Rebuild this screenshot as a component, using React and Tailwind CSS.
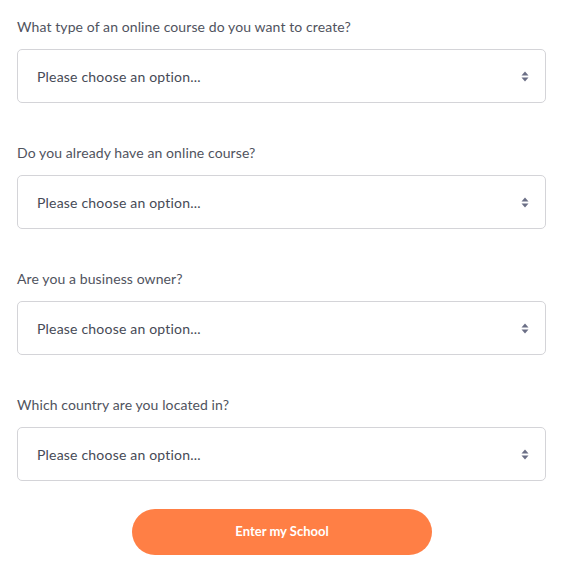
import React from 'react';

const questions = [
  'What type of an online course do you want to create?',
  'Do you already have an online course?',
  'Are you a business owner?',
  'Which country are you located in?',
];

const SortIcon = () => (
  <svg width="8" height="11" viewBox="0 0 8 11" className="shrink-0">
    <path d="M4 0.5 L7.5 4.5 H0.5 Z" fill="#6b6f86" />
    <path d="M4 10.5 L7.5 6.5 H0.5 Z" fill="#6b6f86" />
  </svg>
);

const Field = ({ label }) => (
  <div className="mb-[40px]">
    <div className="text-[14px] leading-[20px] text-[#50535e] tracking-[0.1px]">{label}</div>
    <div className="mt-[12px] h-[54px] flex items-center justify-between pl-[19px] pr-[16px] border border-[#d4d4d8] rounded-[5px] bg-white">
      <span className="text-[14px] text-[#464a56] tracking-[0.2px]">Please choose an option...</span>
      <SortIcon />
    </div>
  </div>
);

export default function App() {
  return (
    <div className="w-[567px] h-[572px] bg-white pt-[17px] pl-[17px]" style={{ fontFamily: 'Lato, "Noto Sans", sans-serif' }}>
      <div className="w-[529px]">
        {questions.map((q) => (
          <Field key={q} label={q} />
        ))}
        <div className="flex justify-center -mt-[12px] pl-[1px]">
          <button className="w-[300px] h-[46px] rounded-full bg-[#ff7f45] text-white text-[13px] font-bold">
            Enter my School
          </button>
        </div>
      </div>
    </div>
  );
}
